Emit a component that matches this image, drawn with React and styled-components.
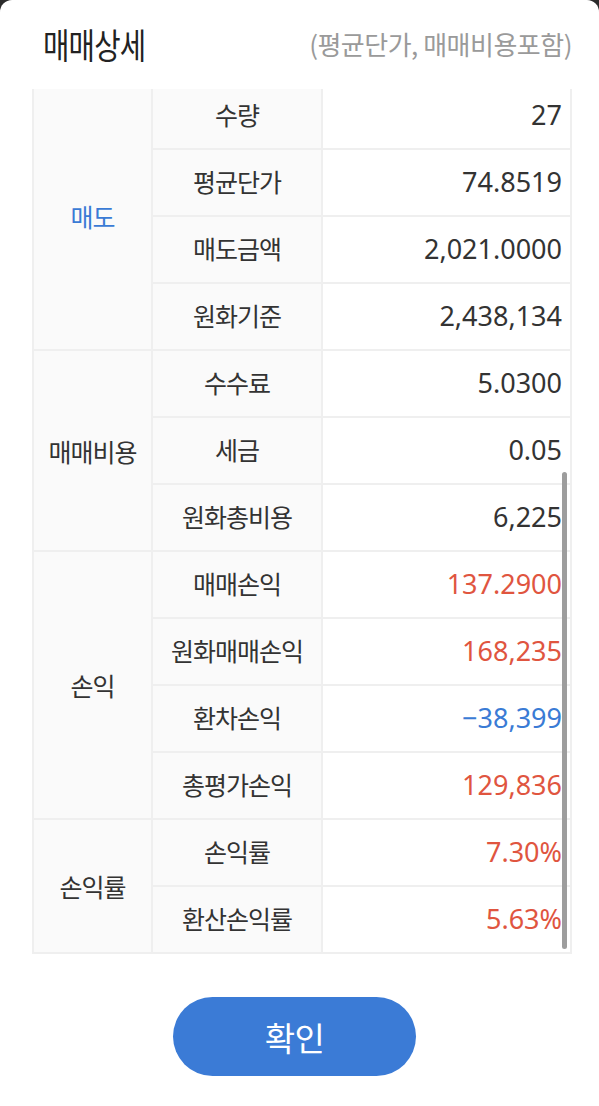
import React from 'react'
import styled, { createGlobalStyle } from 'styled-components'

const GlobalStyle = createGlobalStyle`
	html, body {
		margin: 0;
		padding: 0;
		background: #2b2b2b;
	}
	body {
		font-family: "Noto Sans", "Noto Sans CJK KR", sans-serif;
		-webkit-font-smoothing: antialiased;
	}
`

const Sheet = styled.div`
	width: 599px;
	height: 1106px;
	background: #fff;
	border-radius: 12px 12px 0 0;
	display: flex;
	flex-direction: column;
	box-sizing: border-box;
	overflow: hidden;
`

const Header = styled.div`
	height: 89px;
	display: flex;
	align-items: flex-start;
	justify-content: space-between;
	padding: 20px 27px 0 43px;
	box-sizing: border-box;
`

const Title = styled.h1`
	margin: 0;
	font-family: "Noto Sans CJK KR", sans-serif;
	font-size: 35px;
	font-weight: 400;
	letter-spacing: -1px;
	color: #222;
	line-height: 48px;
	transform: scaleX(0.82);
	transform-origin: left center;
`

const SubTitle = styled.span`
	font-family: "Noto Sans CJK KR", sans-serif;
	font-size: 26px;
	letter-spacing: -0.5px;
	color: #9a9a9a;
	line-height: 48px;
`

const ScrollArea = styled.div`
	position: relative;
	height: 866px;
	margin: 0 27px 0 32px;
	overflow: hidden;
`

const Scrollbar = styled.div`
	position: absolute;
	right: 5px;
	top: 383px;
	width: 5px;
	height: 477px;
	border-radius: 3px;
	background: #9d9d9d;
`

const Table = styled.table`
	width: 540px;
	margin-top: -8px;
	border-collapse: collapse;
	table-layout: fixed;
	border: 2px solid #e6e6e6;
`

const GroupCell = styled.td`
	width: 115px;
	background: #fafafa;
	border: 2px solid #efefef;
	text-align: center;
	font-family: "Noto Sans CJK KR", sans-serif;
	font-size: 25px;
	letter-spacing: -1px;
	color: ${p => p.$color || '#333'};
`

const LabelCell = styled.td`
	width: 168px;
	height: 62px;
	background: #fafafa;
	border: 2px solid #efefef;
	text-align: center;
	font-family: "Noto Sans CJK KR", sans-serif;
	font-size: 25px;
	letter-spacing: -1px;
	color: #333;
	padding: 0 0 3px;
`

const ValueCell = styled.td`
	background: #fff;
	border: 2px solid #efefef;
	text-align: right;
	padding: 0 8px 3px 0;
	font-family: "Noto Sans", sans-serif;
	font-size: 27px;
	color: ${p => p.$color || '#333'};
`

const ButtonRow = styled.div`
	display: flex;
	justify-content: center;
	padding: 42px 10px 0 0;
`

const ConfirmButton = styled.button`
	width: 243px;
	height: 79px;
	border: none;
	border-radius: 40px;
	background: #3b7bd6;
	color: #fff;
	font-family: "Noto Sans CJK KR", sans-serif;
	font-size: 33px;
	letter-spacing: -0.5px;
`

const RED = '#e0553f'
const BLUE = '#3a7bd5'

const groups = [
	{
		name: '매도',
		color: BLUE,
		rows: [
			['수량', '27'],
			['평균단가', '74.8519'],
			['매도금액', '2,021.0000'],
			['원화기준', '2,438,134'],
		],
	},
	{
		name: '매매비용',
		rows: [
			['수수료', '5.0300'],
			['세금', '0.05'],
			['원화총비용', '6,225'],
		],
	},
	{
		name: '손익',
		rows: [
			['매매손익', '137.2900', RED],
			['원화매매손익', '168,235', RED],
			['환차손익', '−38,399', BLUE],
			['총평가손익', '129,836', RED],
		],
	},
	{
		name: '손익률',
		rows: [
			['손익률', '7.30%', RED],
			['환산손익률', '5.63%', RED],
		],
	},
]

export default function App() {
	return (
		<>
			<GlobalStyle />
			<Sheet>
				<Header>
					<Title>매매상세</Title>
					<SubTitle>(평균단가, 매매비용포함)</SubTitle>
				</Header>
				<ScrollArea>
					<Table>
						<tbody>
							{groups.map(g =>
								g.rows.map(([label, value, color], i) => (
									<tr key={g.name + label}>
										{i === 0 &&
											<GroupCell rowSpan={g.rows.length} $color={g.color}>{g.name}</GroupCell>}
										<LabelCell>{label}</LabelCell>
										<ValueCell $color={color}>{value}</ValueCell>
									</tr>
								))
							)}
						</tbody>
					</Table>
					<Scrollbar />
				</ScrollArea>
				<ButtonRow>
					<ConfirmButton>확인</ConfirmButton>
				</ButtonRow>
			</Sheet>
		</>
	)
}
